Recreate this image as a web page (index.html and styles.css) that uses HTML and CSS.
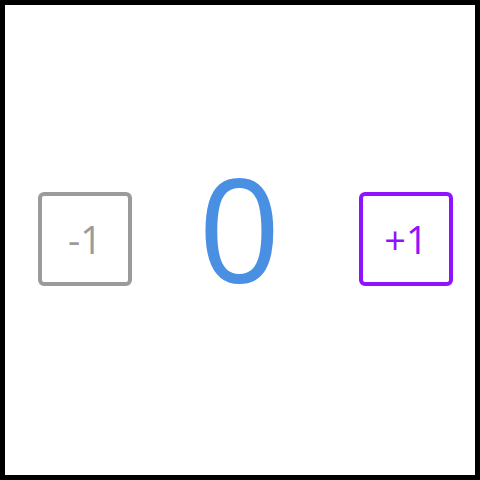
FILE: index.html
```html
<!DOCTYPE html>
<html>
<head>
<meta charset="utf-8">
<link rel="stylesheet" href="styles.css">
</head>
<body>
<div class="frame">
  <div class="row">
    <button class="btn btn-dec">-1</button>
    <div class="count">0</div>
    <button class="btn btn-inc">+1</button>
  </div>
</div>
</body>
</html>
```
FILE: styles.css
```css
html, body {
  margin: 0;
  padding: 0;
  background: #fff;
}
.frame {
  width: 480px;
  height: 480px;
  box-sizing: border-box;
  border: 5px solid #000;
  display: flex;
  align-items: center;
  font-family: "Open Sans", sans-serif;
}
.row {
  display: flex;
  align-items: center;
  padding-left: 33px;
  margin-top: -2px;
}
.btn {
  width: 94px;
  height: 94px;
  box-sizing: border-box;
  border-radius: 6px;
  background: #fff;
  font-family: "Open Sans", sans-serif;
  font-size: 38px;
  padding: 0;
  line-height: 1;
  display: flex;
  align-items: center;
  justify-content: center;
}
.btn-dec {
  border: 4px solid #9b9b9b;
  color: #9b9b9b;
}
.btn-inc {
  border: 4px solid #9013fe;
  color: #9013fe;
}
.count {
  width: 215px;
  padding-right: 12px;
  text-align: center;
  font-size: 144px;
  line-height: 1;
  color: #4a90e2;
  margin-top: -24px;
}
```
